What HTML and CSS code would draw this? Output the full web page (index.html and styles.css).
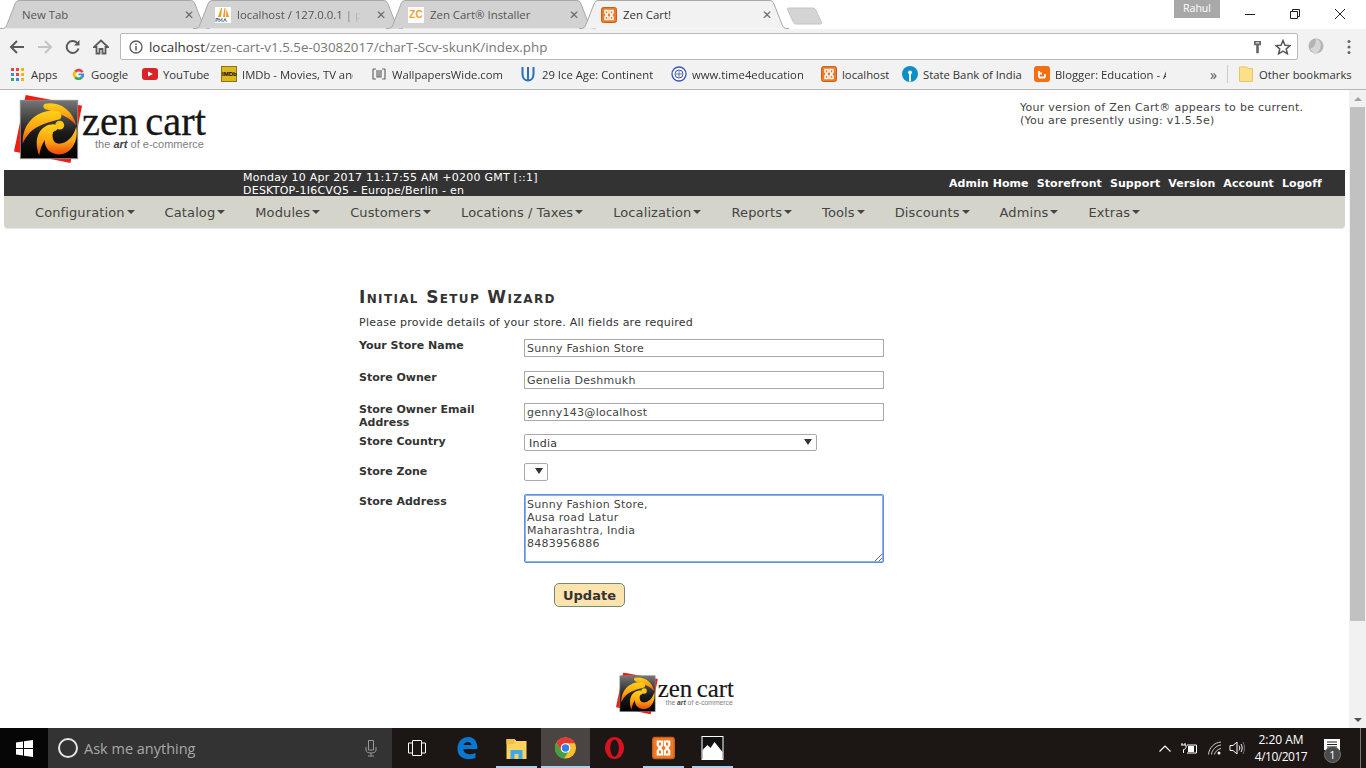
FILE: index.html
```html
<!DOCTYPE html>
<html lang="en">
<head>
<meta charset="utf-8">
<title>Zen Cart!</title>
<link rel="stylesheet" href="styles.css">
</head>
<body>
<svg class="defs" width="0" height="0" aria-hidden="true">
  <defs>
    <linearGradient id="swirl" x1="0" y1="0" x2="0" y2="1"><stop offset="0" stop-color="#ffd21a"/><stop offset=".55" stop-color="#ffa010"/><stop offset="1" stop-color="#e8480c"/></linearGradient>
    <linearGradient id="tile" x1="0" y1="0" x2="0" y2="1"><stop offset="0" stop-color="#767676"/><stop offset=".55" stop-color="#1c1c1c"/><stop offset="1" stop-color="#000"/></linearGradient>
    <symbol id="mark" viewBox="0 0 72 72">
      <polygon points="12,0 70,11 58,70 0,58" fill="#f01c10"/>
      <rect x="6.5" y="5.5" width="59" height="60" fill="url(#tile)" stroke="#8a8a8a"/>
      <path fill="url(#swirl)" d="M32 9C46 6 60 15 64 31 56 22 44 18 33 15 30 14 29 10 32 9Z"/>
      <path fill="url(#swirl)" d="M46 17C28 13 8 26 9 50 13 41 19 35 26 32 32 29 39 27 47 25 50 23 49 18 46 17Z"/>
      <path fill="url(#swirl)" d="M41 30C27 30 19 44 26 62 28 50 33 41 44 36 46 34 44 30 41 30Z"/>
      <path fill="url(#swirl)" d="M64 33C67 48 58 63 44 61 35 60 30 51 32 44 33 39 37 36 41 36 38 42 40 49 45 50 53 51 61 44 64 33Z"/>
      <circle cx="47" cy="31" r="4.6" fill="#ffc814"/>
    </symbol>
    <symbol id="tabshape" viewBox="0 0 210 29">
      <path d="M0 28.5H2C5 28.5 6 27 7 24.500L15 4C16 1.500 17 .5 20 .5H190C193 .5 194 1.500 195 4L203 24.500C204 27 205 28.500 208 28.500H210"/>
    </symbol>
    <symbol id="xampp" viewBox="0 0 16 16">
      <rect x=".5" y=".5" width="15" height="15" rx="2" fill="#ef7a26" stroke="#c9601a"/>
      <path d="M4 3.500H7V6L5.500 8 7 10V12.500H4V10L5.500 8 4 6ZM12 3.500H9V6L10.500 8 9 10V12.500H12V10L10.500 8 12 6Z" fill="none" stroke="#fff" stroke-width="1.500"/>
    </symbol>
  </defs>
</svg>

<header class="chrome">
  <div class="tabstrip">
    <div class="tab"><svg class="tabbg"><use href="#tabshape"/></svg><span class="tabtitle">New Tab</span><span class="tabx">✕</span></div>
    <div class="tab"><svg class="tabbg"><use href="#tabshape"/></svg>
      <svg class="fav" viewBox="0 0 16 16"><rect width="16" height="16" fill="#fff"/><path d="M3 10 6 1H7L6 10ZM8 10 9.500 1H10.500L10 10ZM11 10 11.500 2 14 10Z" fill="#f29a1c"/><path d="M1 15V11.500H3V13H1.500M4 15V11.500L5.500 13.500 7 11.500V15M8.500 15 10 11.500 11.500 15" fill="none" stroke="#456a96" stroke-width=".9"/></svg>
      <span class="tabtitle fade">localhost / 127.0.0.1 | phpMyAdmin</span><span class="tabx">✕</span></div>
    <div class="tab"><svg class="tabbg"><use href="#tabshape"/></svg><span class="fav zc">ZC</span><span class="tabtitle">Zen Cart® Installer</span><span class="tabx">✕</span></div>
    <div class="tab active"><svg class="tabbg"><use href="#tabshape"/></svg><svg class="fav"><use href="#xampp"/></svg><span class="tabtitle">Zen Cart!</span><span class="tabx">✕</span></div>
    <svg class="newtab" viewBox="0 0 36 18"><path d="M1.500 1H26C27 1 28 1.500 28.500 2.500L34.500 15C35 16.500 34 17 33 17H9C8 17 7 16.500 6.500 15.500L.5 2.500C0 1.500.5 1 1.500 1Z" fill="#d4d4d4" stroke="#c4c4c4"/></svg>
    <div class="spacer"></div>
    <div class="profile">Rahul</div>
    <div class="winctl">
      <svg viewBox="0 0 10 10"><path d="M0 5.500H10" stroke="#222"/></svg>
      <svg viewBox="0 0 10 10"><path d="M.5 2.500H7.500V9.500H.5ZM2.500 2.500V.5H9.500V7.500H7.500" fill="none" stroke="#222"/></svg>
      <svg viewBox="0 0 10 10"><path d="M0 0 10 10M10 0 0 10" stroke="#222"/></svg>
    </div>
  </div>
  <div class="toolbar">
    <svg class="nav-ic" viewBox="0 0 16 16"><path d="M15 8H2M8 2 2 8 8 14" fill="none" stroke="#5a5a5a" stroke-width="2"/></svg>
    <svg class="nav-ic" viewBox="0 0 16 16"><path d="M1 8H14M8 2 14 8 8 14" fill="none" stroke="#c4c4c4" stroke-width="2"/></svg>
    <svg class="nav-ic" viewBox="0 0 16 16"><path d="M13.500 9.500A6 6 0 1 1 12 3.800" fill="none" stroke="#5a5a5a" stroke-width="2"/><path d="M14.500 1V6.500H9Z" fill="#5a5a5a"/></svg>
    <svg class="nav-ic" viewBox="0 0 16 16"><path d="M8 1.500 1 8H3.500V14.500H6.500V10H9.500V14.500H12.500V8H15Z" fill="none" stroke="#5a5a5a" stroke-width="1.800"/></svg>
    <div class="omnibox">
      <svg class="info" viewBox="0 0 14 14"><circle cx="7" cy="7" r="6" fill="none" stroke="#5a5a5a" stroke-width="1.300"/><path d="M7 6V10.500M7 3.500V5" stroke="#5a5a5a" stroke-width="1.500"/></svg>
      <span class="url"><span class="host">localhost</span>/zen-cart-v1.5.5e-03082017/charT-Scv-skunK/index.php</span>
      <svg class="key" viewBox="0 0 10 16"><path d="M1 1H9V6H6.500V15H3.500V6H1Z" fill="#666"/><rect x="3" y="2.500" width="4" height="1.500" fill="#ddd"/></svg>
      <svg class="star" viewBox="0 0 16 16"><path d="M8 1.500 10 6.200 15 6.600 11.200 9.900 12.400 14.800 8 12.200 3.600 14.800 4.800 9.900 1 6.600 6 6.200Z" fill="none" stroke="#555" stroke-width="1.500"/></svg>
    </div>
    <svg class="ext" viewBox="0 0 18 18"><circle cx="9" cy="8" r="7.500" fill="#b4b4b4"/><path d="M9 1C13 2 15 6 13 11 12 14 9 15 8 17 7 14 4 13 3 10 6 11 9 7 9 1Z" fill="#d6d6d6"/></svg>
    <svg class="menu" viewBox="0 0 4 16"><circle cx="2" cy="2.500" r="1.500" fill="#666"/><circle cx="2" cy="8" r="1.500" fill="#666"/><circle cx="2" cy="13.500" r="1.500" fill="#666"/></svg>
  </div>
  <div class="bookmarks">
    <div class="bm bm-apps"><svg class="bmi small" viewBox="0 0 13 13"><g><rect width="3" height="3" fill="#e8453c"/><rect x="5" width="3" height="3" fill="#e8453c"/><rect x="10" width="3" height="3" fill="#f4b400"/><rect y="5" width="3" height="3" fill="#4285f4"/><rect x="5" y="5" width="3" height="3" fill="#e8453c"/><rect x="10" y="5" width="3" height="3" fill="#f4b400"/><rect y="10" width="3" height="3" fill="#34a853"/><rect x="5" y="10" width="3" height="3" fill="#4285f4"/><rect x="10" y="10" width="3" height="3" fill="#f4b400"/></g></svg><span>Apps</span></div>
    <div class="bm bm-google"><svg class="bmi small" viewBox="0 0 14 14"><path d="M12.500 4A6 6 0 0 0 2.500 3L4.500 5A3.500 3.500 0 0 1 10 5Z" fill="#ea4335"/><path d="M2.500 3A6 6 0 0 0 2.500 11L4.500 9A3.500 3.500 0 0 1 4.500 5Z" fill="#fbbc05"/><path d="M2.500 11A6 6 0 0 0 11.500 11L9.500 9A3.500 3.500 0 0 1 4.500 9Z" fill="#34a853"/><path d="M7 5.800H13C13.300 8 12.800 9.800 11.500 11L9.500 9C10 8.500 10.300 8.200 10.400 7.800H7Z" fill="#4285f4"/></svg><span>Google</span></div>
    <div class="bm bm-yt"><svg class="bmi" viewBox="0 0 16 16"><rect y="2" width="16" height="12" rx="3" fill="#d9252a"/><path d="M6 5.500V10.500L11 8Z" fill="#fff"/></svg><span>YouTube</span></div>
    <div class="bm bm-imdb"><span class="imdb">IMDb</span><span class="fade">IMDb - Movies, TV and Celebrities</span></div>
    <div class="bm bm-wp"><svg class="bmi" viewBox="0 0 16 16"><path d="M2 3H5M2 3V13H5M14 3H11M14 3V13H11" fill="none" stroke="#666" stroke-width="1.200"/><path d="M6 4V11H8V4M8 11H10V4" fill="none" stroke="#666" stroke-width="1.200"/></svg><span class="fade">WallpapersWide.com - HD</span></div>
    <div class="bm bm-ice"><svg class="bmi narrow" viewBox="0 0 14 16"><path d="M1.500 1V8C1.500 12 4 14.500 7 14.500S12.500 12 12.500 8V1M7 1V14" fill="none" stroke="#2d6fb5" stroke-width="2"/></svg><span class="fade">29 Ice Age: Continental Drift</span></div>
    <div class="bm bm-t4"><svg class="bmi" viewBox="0 0 16 16"><circle cx="8" cy="8" r="7" fill="#fff" stroke="#3a55b5" stroke-width="1.300"/><circle cx="8" cy="8" r="4" fill="none" stroke="#3a55b5"/><path d="M5 8H11M8 5V11" stroke="#3a55b5" stroke-width=".8"/></svg><span class="fade">www.time4education.com - T</span></div>
    <div class="bm bm-lh"><svg class="bmi"><use href="#xampp"/></svg><span>localhost</span></div>
    <div class="bm bm-sbi"><svg class="bmi" viewBox="0 0 16 16"><circle cx="8" cy="8" r="8" fill="#0a8fc7"/><circle cx="8" cy="6.500" r="2" fill="#fff"/><rect x="7" y="7.500" width="2" height="8" fill="#fff"/></svg><span>State Bank of India</span></div>
    <div class="bm bm-blog"><svg class="bmi" viewBox="0 0 16 16"><rect width="16" height="16" rx="3" fill="#f46f12"/><path d="M5 11.500H11M5 7.500H8M5 5V11.500M11 8V11.500" fill="none" stroke="#fff" stroke-width="1.800"/></svg><span class="fade">Blogger: Education - A Blog</span></div>
    <span class="more">»</span>
    <span class="bmsep"></span>
    <div class="bm bm-other"><svg class="bmi folder" viewBox="0 0 14 16"><path d="M.5 1H8L9.500 2.500H13.500V15.500H.5Z" fill="#fbe08a" stroke="#e6c765"/></svg><span>Other bookmarks</span></div>
  </div>
</header>

<main class="viewport">
  <div class="page">
    <div class="adminhead">
      <svg class="logo" viewBox="0 0 192 70" role="img" aria-label="Zen Cart">
        <use href="#mark" x="0" y="0" width="70" height="70"/>
        <text x="68" y="40" class="logo-word" textLength="124" lengthAdjust="spacingAndGlyphs">zen cart</text>
        <text x="81" y="53" class="logo-tag" textLength="109" lengthAdjust="spacingAndGlyphs">the <tspan class="logo-art">art</tspan> of e-commerce</text>
      </svg>
      <div class="version">Your version of Zen Cart® appears to be current.<br>(You are presently using: v1.5.5e)</div>
    </div>
    <div class="statusbar">
      <div class="statusinfo">Monday 10 Apr 2017 11:17:55 AM +0200 GMT [::1]<br>DESKTOP-1I6CVQ5 - Europe/Berlin - en</div>
      <nav class="toplinks"><a>Admin Home</a><a>Storefront</a><a>Support</a><a>Version</a><a>Account</a><a>Logoff</a></nav>
    </div>
    <nav class="mainmenu">
      <a>Configuration</a><a>Catalog</a><a>Modules</a><a>Customers</a><a>Locations / Taxes</a><a>Localization</a><a>Reports</a><a>Tools</a><a>Discounts</a><a>Admins</a><a>Extras</a>
    </nav>
    <section class="wizard">
      <h1>Initial Setup Wizard</h1>
      <p>Please provide details of your store. All fields are required</p>
      <form class="setup">
        <div class="row r32"><label>Your Store Name</label><input class="field" type="text" value="Sunny Fashion Store"></div>
        <div class="row r32"><label>Store Owner</label><input class="field" type="text" value="Genelia Deshmukh"></div>
        <div class="row r31"><label>Store Owner Email Address</label><input class="field" type="text" value="genny143@localhost"></div>
        <div class="row r29"><label class="low">Store Country</label><span class="selwrap wide"><select><option>India</option></select><i class="selarrow"></i></span></div>
        <div class="row r31"><label class="lower">Store Zone</label><span class="selwrap narrowsel"><select></select><i class="selarrow"></i></span></div>
        <div class="row"><label class="low">Store Address</label><textarea class="address">Sunny Fashion Store,
Ausa road Latur
Maharashtra, India
8483956886</textarea></div>
        <button class="update" type="button">Update</button>
      </form>
    </section>
    <svg class="logo footlogo" viewBox="0 0 192 70" role="img" aria-label="Zen Cart">
      <use href="#mark" x="0" y="0" width="70" height="70"/>
      <text x="68" y="40" class="logo-word" textLength="124" lengthAdjust="spacingAndGlyphs">zen cart</text>
      <text x="81" y="53" class="logo-tag" textLength="109" lengthAdjust="spacingAndGlyphs">the <tspan class="logo-art">art</tspan> of e-commerce</text>
    </svg>
  </div>
  <div class="scrollbar">
    <i class="sb-btn up"></i>
    <div class="sb-thumb"></div>
    <div class="spacer"></div>
    <i class="sb-btn down"></i>
  </div>
</main>

<footer class="taskbar">
  <div class="start"><svg viewBox="0 0 17 17"><path d="M0 2.500 7 1.500V8H0ZM8 1.300 17 0V8H8ZM0 9H7V15.500L0 14.500ZM8 9H17V17L8 15.700Z" fill="#fff"/></svg></div>
  <div class="search">
    <span class="cortana"></span><span class="ask">Ask me anything</span>
    <svg class="mic" viewBox="0 0 12 18"><path d="M3.500 1.500H8.500V11H3.500ZM1 8V11C1 13 3 14 6 14S11 13 11 11V8M6 14V17M3 17H9" fill="none" stroke="#999"/></svg>
  </div>
  <div class="taskview"><svg viewBox="0 0 20 18"><path d="M5.500 1.500H14.500V16.500H5.500ZM5 4H1.500V14H5M15 4H18.500V14H15" fill="none" stroke="#fff"/></svg></div>
  <div class="taskicons">
    <div class="task"><svg viewBox="0 0 22 24"><path d="M1 13C1 5 6 1 12 1 18 1 21 6 21 13H7C7 17 11 20 19 17V22C10 25 1 22 1 13ZM7 9H15C15 5 8 5 7 9Z" fill="#0a78d0"/></svg></div>
    <div class="task on"><svg viewBox="0 0 22 24"><path d="M1 3H9L11 5H21V23H1Z" fill="#fbd35c"/><path d="M1 3H9L9 8H1Z" fill="#eec24a"/><path d="M5 14H17V23H13V18H9V23H5Z" fill="#3fa9e8"/></svg></div>
    <div class="task on current"><svg viewBox="0 0 24 24"><circle cx="12" cy="12" r="11" fill="#fbc02d"/><path d="M12 1A11 11 0 0 0 2.500 6.500L7.500 15 12 7H22A11 11 0 0 0 12 1Z" fill="#e53935"/><path d="M2.500 6.500A11 11 0 0 0 10.500 23L15.500 15H7.500Z" fill="#43a047"/><circle cx="12" cy="12" r="5" fill="#fff"/><circle cx="12" cy="12" r="3.800" fill="#2f80ed"/></svg></div>
    <div class="task"><svg viewBox="0 0 24 24"><ellipse cx="12" cy="12" rx="10" ry="11.500" fill="#d8121f"/><ellipse cx="12" cy="12" rx="4.500" ry="9" fill="#1c1614"/></svg></div>
    <div class="task on"><svg viewBox="0 0 16 16"><use href="#xampp"/></svg></div>
    <div class="task on"><svg viewBox="0 0 22 24"><rect width="22" height="24" fill="#fff"/><rect x="1" y="1" width="20" height="22" fill="#111"/><path d="M1 23V14L6 9 9 12 13 6 21 16V23Z" fill="#fff"/></svg></div>
  </div>
  <div class="spacer"></div>
  <div class="tray">
    <svg class="t-chev" viewBox="0 0 12 7"><path d="M.5 6.500 6 1 11.500 6.500" fill="none" stroke="#fff" stroke-width="1.200"/></svg>
    <svg class="t-batt" viewBox="0 0 17 12"><path d="M6 3H15.500V11H6" fill="none" stroke="#fff"/><rect x="7" y="4" width="6" height="6" fill="#fff"/><path d="M1 1V3M4 1V3M0 3H5V5.500C5 7 3 7.500 2.500 7.500V11" fill="none" stroke="#fff"/></svg>
    <svg class="t-wifi" viewBox="0 0 14 14"><g fill="none" stroke="#ccc"><path d="M.5 13.500C1 7 6 1.500 13 1"/><path d="M3.500 13.500C4 9 8 4.500 13 4"/><path d="M6.500 13.500C7 11 9.500 8 13 7.500"/></g><circle cx="11" cy="12" r="1.500" fill="#fff"/></svg>
    <svg class="t-vol" viewBox="0 0 16 14"><path d="M1 4.500H4L8 1V13L4 9.500H1Z" fill="none" stroke="#fff"/><path d="M10 4.500C11 6 11 8 10 9.500M12 3C13.500 5 13.500 9 12 11" fill="none" stroke="#fff"/><path d="M14 1C16 4 16 10 14 13" fill="none" stroke="#777"/></svg>
    <div class="clock"><span>2:20 AM</span><span class="date">4/10/2017</span></div>
    <div class="notif"><svg viewBox="0 0 16 16"><path d="M0 1H16V12H6L3 15V12H0Z" fill="#fff"/><path d="M3 4H13M3 6.500H13M3 9H13" stroke="#222"/></svg><b class="badge">1</b></div>
    <span class="showdesk"></span>
  </div>
</footer>
</body>
</html>
```
FILE: styles.css
```css
* { box-sizing: border-box; }
html, body { margin: 0; height: 768px; overflow: hidden; }
body { display: flex; flex-direction: column; width: 1366px; background: #fff; font-family: "DejaVu Sans", Verdana, sans-serif; }
.defs { position: absolute; }
.spacer { flex: 1; }
.fade { -webkit-mask-image: linear-gradient(to right, #000 85%, transparent); mask-image: linear-gradient(to right, #000 85%, transparent); }

/* browser chrome */
.chrome { height: 90px; font-family: "Open Sans", "Noto Sans", sans-serif; color: #333; flex: none; }
.tabstrip { height: 29px; display: flex; background: #fff; }
.tab { position: relative; width: 210px; height: 29px; margin-right: -17px; padding-left: 22px; display: flex; align-items: center; font-size: 11.400px; color: #555; }
.tabbg { position: absolute; left: 0; top: 0; width: 210px; height: 29px; fill: #d2d2d2; stroke: #a8a8a8; stroke-width: 1px; }
.tab.active { z-index: 2; color: #333; }
.tab.active .tabbg { fill: #f2f2f2; }
.tab > *:not(.tabbg) { position: relative; }
.fav { width: 16px; height: 16px; margin-right: 6px; flex: none; }
.zc { background: #fff; color: #f0a030; font: bold 10px/16px "Liberation Sans", sans-serif; text-align: center; }
.tabtitle { flex: none; width: 124px; white-space: nowrap; overflow: hidden; margin-right: 14px; }
.tab:first-child .tabtitle { width: 146px; margin-right: 15px; }
.tabx { width: 12px; font-size: 12px; text-align: center; color: #6a6a6a; font-family: "DejaVu Sans", sans-serif; }
.newtab { width: 36px; height: 18px; margin: 7px 0 0 15px; }
.profile { width: 46px; height: 18px; background: #a8a8a8; color: #fff; font: 10.500px/17px "Open Sans", sans-serif; text-align: center; margin-right: 25px; }
.winctl { display: flex; width: 121px; gap: 35px; padding: 9px 0 0 0; }
.winctl svg { width: 10px; height: 10px; flex: none; }

.toolbar { height: 32px; background: #f2f2f2; display: flex; align-items: center; padding: 3px 0 0 9px; }
.nav-ic { width: 16px; height: 16px; margin-right: 12px; flex: none; }
.omnibox { width: 1178px; height: 27px; margin-left: -1px; background: #fff; border: 1px solid #b9b9b9; border-radius: 2px; display: flex; align-items: center; padding-left: 8px; }
.info { width: 14px; height: 14px; margin-right: 6px; flex: none; }
.url { flex: 1; font-size: 13.350px; color: #777; white-space: nowrap; }
.host { color: #333; }
.key { width: 9px; height: 14px; margin-right: 13px; }
.star { width: 16px; height: 16px; margin-right: 6px; }
.ext { width: 18px; height: 18px; margin-left: 9px; }
.menu { width: 4px; height: 16px; margin-left: 22px; }

.bookmarks { height: 29px; background: #f2f2f2; border-bottom: 1px solid #b5b5b5; display: flex; align-items: center; padding: 0 0 2px 11px; font-size: 11.300px; color: #333; white-space: nowrap; }
.bm { display: flex; align-items: center; gap: 5px; flex: none; overflow: hidden; margin-right: 14px; }
.bmi { width: 16px; height: 16px; flex: none; }
.bmi.small { width: 13px; height: 13px; }
.bm-apps { width: 47px; gap: 7px; }
.bm-google { width: 58px; gap: 6px; margin-right: 12px; }
.bm-yt { width: 67px; margin-right: 12px; }
.imdb { width: 16px; height: 16px; flex: none; background: #dfb81e; border: 1px solid #8a7414; color: #000; font: bold 6px/14px "Liberation Sans", sans-serif; text-align: center; }
.bm-imdb { width: 132px; margin-right: 18px; }
.bm-wp { width: 132px; margin-right: 18px; }
.bm-ice { width: 132px; gap: 7px; margin-right: 18px; }
.bmi.narrow { width: 14px; }
.bm-t4 { width: 132px; margin-right: 18px; }
.bm-lh { width: 69px; margin-right: 12px; }
.bm-sbi { width: 120px; margin-right: 12px; }
.bm-blog { width: 132px; margin-right: 18px; }
.more { margin-left: 26px; width: 17px; font-size: 14px; color: #555; }
.bmsep { width: 1px; height: 18px; background: #ccc; margin: 0 11px 0 0; }
.bmi.folder { width: 14px; }
.bm-other { gap: 6px; margin: 0; }

/* page */
.viewport { height: 638px; flex: none; display: flex; }
.page { width: 1349px; padding: 0 4px; overflow: hidden; color: #333; }
.adminhead { height: 80px; display: flex; justify-content: space-between; }
.logo { display: block; }
.adminhead .logo { width: 192px; height: 70px; margin: 5px 0 0 10px; }
.logo-word { font: 42px "Liberation Serif", serif; fill: #161616; stroke: #161616; stroke-width: .3px; word-spacing: -3px; }
.logo-tag { font: 11.500px "Liberation Sans", sans-serif; fill: #808080; }
.logo-art { font-weight: bold; font-style: italic; fill: #444; }
.version { width: 325px; padding-top: 11px; font-size: 11px; line-height: 13px; color: #444; letter-spacing: .27px; }
.statusbar { height: 26px; background: #333; color: #fff; display: flex; justify-content: space-between; padding: 0 23px 0 239px; font-size: 11px; line-height: 13px; }
.statusinfo { padding-top: 1px; letter-spacing: .24px; }
.toplinks { display: flex; gap: 8px; align-items: center; font-weight: bold; letter-spacing: .08px; }
.mainmenu { height: 32px; background: #d4d4cb; border-radius: 0 0 4px 4px; box-shadow: 0 1px 1px #e4e4e4; display: flex; align-items: center; padding-left: 16px; font-size: 13px; color: #444; letter-spacing: .11px; }
.mainmenu a { padding: 0 15px; display: flex; align-items: center; }
.mainmenu a::after { content: ""; margin-left: 2px; border: 4px solid transparent; border-top-color: #444; border-bottom: 0; }

.wizard { padding: 59px 0 0 355px; }
.wizard h1 { margin: 0; font-size: 17px; line-height: 20px; font-variant: small-caps; font-weight: bold; color: #333; letter-spacing: 1.350px; }
.wizard p { margin: 9px 0 10px; font-size: 11px; line-height: 13px; letter-spacing: .25px; }
.row { display: flex; align-items: flex-start; }
.r32 { height: 32px; }
.r31 { height: 31px; }
.r29 { height: 29px; }
.row label { width: 165px; flex: none; padding-right: 20px; font-size: 11px; line-height: 13px; font-weight: bold; color: #333; }
.row label.low { padding-top: 1px; }
.row label.lower { padding-top: 2px; }
.field { display: block; width: 360px; height: 18px; padding: 1px 2px; border: 1px solid #a9a9a9; font: 11px "DejaVu Sans", sans-serif; letter-spacing: .27px; color: #444; border-radius: 0; background: #fff; }
.selwrap { position: relative; display: block; height: 18px; }
.selwrap.wide { width: 293px; height: 17px; }
.selwrap.narrowsel { width: 24px; }
.selwrap select { display: block; appearance: none; -webkit-appearance: none; width: 100%; height: 100%; padding: 1px 4px 0; border: 1px solid #a9a9a9; border-radius: 2px; background: #fff; font: 11px "DejaVu Sans", sans-serif; letter-spacing: .27px; color: #333; }
.selarrow { position: absolute; right: 5px; top: 5px; border: 4px solid transparent; border-top: 6px solid #333; border-bottom: 0; }
.address { display: block; width: 360px; height: 69px; padding: 3px 2px; border: 1px solid #5f8ee0; box-shadow: 0 0 0 1px #8fb0ea inset; border-radius: 2px; font: 11px/13px "DejaVu Sans", sans-serif; letter-spacing: .27px; color: #444; outline: 0; }
.update { display: block; width: 71px; height: 24px; margin: 20px 0 0 195px; padding: 0; background: #fde4ae; border: 1px solid #6f8a70; border-radius: 5px; font: bold 13px "DejaVu Sans", sans-serif; color: #333; }
.footlogo { width: 118px; height: 44px; margin: 65px 0 0 612px; }

.scrollbar { width: 17px; background: #f1f1f1; display: flex; flex-direction: column; align-items: center; }
.sb-btn { width: 17px; height: 17px; flex: none; display: flex; align-items: center; justify-content: center; }
.sb-btn::before { content: ""; border: 4px solid transparent; }
.up::before { border-bottom: 4px solid #a3a3a3; border-top: 0; }
.down::before { border-top: 4px solid #505050; border-bottom: 0; }
.sb-thumb { width: 15px; height: 514px; background: #c1c1c1; flex: none; }

/* taskbar */
.taskbar { height: 40px; flex: none; display: flex; background: #1c1614; color: #fff; font-family: "Open Sans", "Noto Sans", sans-serif; }
.start { width: 48px; background: #060606; display: flex; align-items: center; justify-content: center; }
.start svg { width: 17px; height: 17px; }
.search { width: 344px; background: #333; display: flex; align-items: center; padding-left: 10px; }
.cortana { width: 20px; height: 20px; border: 2.500px solid #e4e4e4; border-radius: 50%; margin-right: 6px; flex: none; }
.ask { flex: 1; font-size: 14.500px; color: #a8a8a8; }
.mic { width: 12px; height: 18px; margin-right: 15px; }
.taskview { width: 49px; display: flex; align-items: center; justify-content: center; }
.taskview svg { width: 20px; height: 18px; }
.taskicons { display: flex; margin-left: 2px; }
.task { width: 49px; display: flex; align-items: center; justify-content: center; position: relative; }
.task svg { width: 23px; height: 24px; }
.task.on::after { content: ""; position: absolute; left: 4px; right: 4px; bottom: 0; height: 2px; background: #a6d2f0; }
.task.current { background: #4a4543; }
.task.current::after { left: 0; right: 0; }
.tray { display: flex; align-items: center; }
.t-chev { width: 12px; height: 7px; margin-right: 10px; }
.t-batt { width: 17px; height: 12px; margin-right: 10px; }
.t-wifi { width: 14px; height: 14px; margin-right: 7px; }
.t-vol { width: 16px; height: 14px; margin-right: 5px; }
.clock { width: 62px; display: flex; flex-direction: column; align-items: center; font-size: 12px; line-height: 17px; margin-right: 7px; }
.date { letter-spacing: -.5px; }
.notif { position: relative; width: 16px; height: 16px; margin: -4px 20px 0 5px; }
.notif svg { width: 16px; height: 16px; display: block; }
.badge { position: absolute; left: 0; top: 8px; width: 17px; height: 17px; border-radius: 50%; background: #4b4b4b; border: 1px solid #777; font: 11px/15px "Open Sans", sans-serif; text-align: center; }
.showdesk { width: 1px; height: 40px; background: #777; margin-right: 5px; }
```
